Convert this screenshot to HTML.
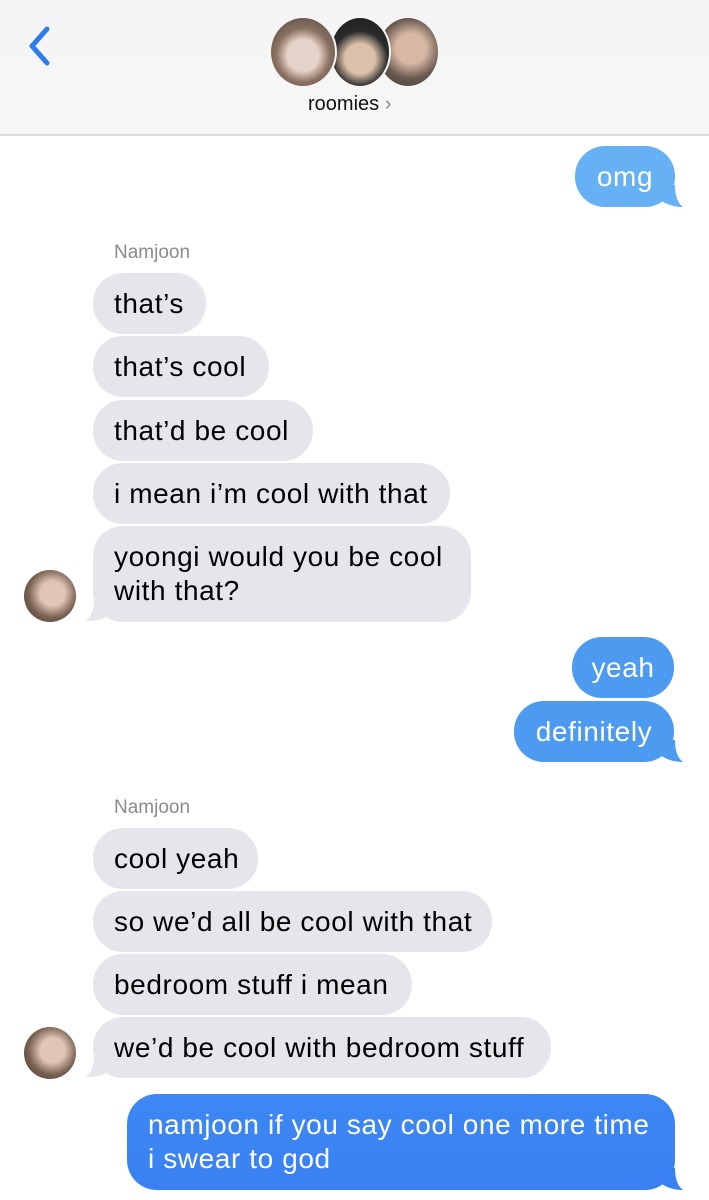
<!DOCTYPE html>
<html><head><meta charset="utf-8"><style>
*{margin:0;padding:0;box-sizing:border-box}
body{width:709px;height:1200px;background:#fff;position:relative;overflow:hidden;font-family:"Liberation Sans",sans-serif;}
.hdr{position:absolute;left:0;top:0;width:709px;height:136px;background:linear-gradient(#f4f4f6,#f7f7f7);border-bottom:2px solid #dcdcdc}
.av{position:absolute;border-radius:50%;border:2px solid #f5f5f5}
.b{position:absolute;height:61px;border-radius:30px;font-size:28px;letter-spacing:0.6px;line-height:61px;padding-left:21px;white-space:nowrap;color:#000;background:#e6e5eb}
.s{color:#fff;padding-left:0;text-align:center}
.lbl{position:absolute;left:114px;font-size:19px;color:#8a8a8e}
svg.t{position:absolute}
</style></head><body>
<div class="hdr">
<svg style="position:absolute;left:24px;top:24px" width="30" height="44"><path d="M23 5 L8 22 L23 39" stroke="#2c7cf0" stroke-width="5" fill="none" stroke-linecap="round" stroke-linejoin="round"/></svg>
<div class="av" style="left:376px;top:16px;width:64px;height:72px;background:radial-gradient(circle at 55% 45%,#d8b8a4 0 30%,#6a5a50 60%,#3a3430)"></div>
<div class="av" style="left:329px;top:16px;width:62px;height:72px;background:radial-gradient(circle at 50% 60%,#dcc2aa 0 30%,#2b2b2b 55%,#1a1a1a)"></div>
<div class="av" style="left:269px;top:16px;width:68px;height:72px;background:radial-gradient(circle at 50% 55%,#e6d2c8 0 32%,#8a7060 55%,#4a4440)"></div>
<div style="position:absolute;left:308px;top:93px;font-size:20px;color:#111">roomies <span style="color:#888">›</span></div>
</div>

<div class="b s" style="left:575px;top:146px;width:100px;background:#65b1f4">omg</div>
<svg class="t" style="left:655px;top:185px" width="30" height="24"><path d="M0 0 L20 0 Q20 16 28 22 Q14 22 4 14 Z" fill="#65b1f4"/></svg>

<div class="lbl" style="top:242px">Namjoon</div>
<div class="b" style="left:93px;top:273px;width:113px">that’s</div>
<div class="b" style="left:93px;top:336px;width:176px">that’s cool</div>
<div class="b" style="left:93px;top:400px;width:220px">that’d be cool</div>
<div class="b" style="left:93px;top:463px;width:357px">i mean i’m cool with that</div>
<div class="b" style="left:93px;top:526px;width:378px;height:96px;line-height:34px;padding-top:14px">yoongi would you be cool<br>with that?</div>
<svg class="t" style="left:84px;top:600px" width="30" height="24"><path d="M30 0 L10 0 Q10 14 2 21 Q16 22 26 14 Z" fill="#e6e5eb"/></svg>
<div class="av" style="left:24px;top:570px;width:52px;height:52px;border:none;background:radial-gradient(circle at 55% 45%,#e0c6b6 0 30%,#7a6050 60%,#40362e)"></div>

<div class="b s" style="left:572px;top:637px;width:102px;background:#4d9bf1">yeah</div>
<div class="b s" style="left:514px;top:701px;width:160px;background:#4d9bf1">definitely</div>
<svg class="t" style="left:655px;top:740px" width="30" height="24"><path d="M0 0 L20 0 Q20 16 28 22 Q14 22 4 14 Z" fill="#4d9bf1"/></svg>

<div class="lbl" style="top:797px">Namjoon</div>
<div class="b" style="left:93px;top:828px;width:165px">cool yeah</div>
<div class="b" style="left:93px;top:891px;width:399px">so we’d all be cool with that</div>
<div class="b" style="left:93px;top:954px;width:319px">bedroom stuff i mean</div>
<div class="b" style="left:93px;top:1017px;width:458px">we’d be cool with bedroom stuff</div>
<svg class="t" style="left:84px;top:1056px" width="30" height="24"><path d="M30 0 L10 0 Q10 14 2 21 Q16 22 26 14 Z" fill="#e6e5eb"/></svg>
<div class="av" style="left:24px;top:1027px;width:52px;height:52px;border:none;background:radial-gradient(circle at 55% 45%,#e0c6b6 0 30%,#7a6050 60%,#40362e)"></div>

<div class="b" style="left:127px;top:1094px;width:548px;height:96px;line-height:34px;padding-top:14px;color:#fff;background:linear-gradient(#3d88f3,#3a80f2)">namjoon if you say cool one more time<br>i swear to god</div>
<svg class="t" style="left:655px;top:1168px" width="30" height="24"><path d="M0 0 L20 0 Q20 16 28 22 Q14 22 4 14 Z" fill="#3a80f2"/></svg>
</body></html>
